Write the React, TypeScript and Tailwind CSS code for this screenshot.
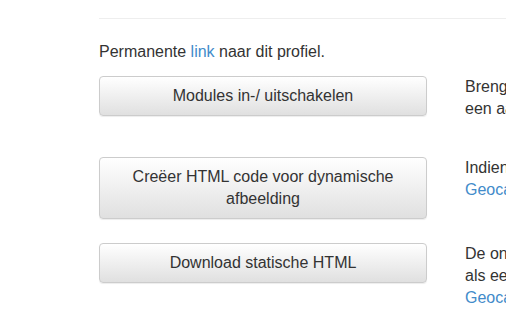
import React from 'react';

const rows = [
  {
    label: ['Modules in-/ uitschakelen'],
    lines: [
      <>Breng wijzigingen aan in de modules van dit profiel,</>,
      <>een aantal modules kun je hier aan- of uitzetten.</>,
    ],
    gap: 'mb-[37px]',
  },
  {
    label: ['Creëer HTML code voor dynamische', 'afbeelding'],
    lines: [
      <>Indien je jouw statistieken op een forum wilt tonen of op de</>,
      <a className="text-[#428bca]">Geocaching.com profielpagina</a>,
    ],
    gap: 'mb-[24px]',
  },
  {
    label: ['Download statische HTML'],
    lines: [
      <>De onderstaande HTML kun je downloaden en plaatsen</>,
      <>als een statische pagina op je eigen website of op je</>,
      <a className="text-[#428bca]">Geocaching.com profiel</a>,
    ],
    gap: '',
  },
];

export default function App() {
  return (
    <div
      className="w-[506px] h-[336px] overflow-hidden bg-white text-[16px] leading-[22px] text-[#333]"
      style={{ fontFamily: '"Liberation Sans", Arial, sans-serif' }}
    >
      <div className="w-[900px] pl-[99px] pt-[18px]">
        <hr className="border-0 border-t border-[#eee]" />
        <p className="mt-[22px] mb-[13px]">
          Permanente <a className="text-[#428bca]">link</a> naar dit profiel.
        </p>

        {rows.map((row, i) => (
          <div key={i} className={`flex items-start gap-[38px] ${row.gap}`}>
            <button className="w-[328px] shrink-0 rounded-[4px] border border-[#ccc] bg-gradient-to-b from-white to-[#e0e0e0] py-[8px] text-[16px] leading-[22px] text-[#333] shadow-[inset_0_1px_0_rgba(255,255,255,0.15),0_1px_1px_rgba(0,0,0,0.075)]">
              {row.label.map((l, j) => (
                <div key={j}>{l}</div>
              ))}
            </button>
            <div className="whitespace-nowrap">
              {row.lines.map((l, j) => (
                <div key={j}>{l}</div>
              ))}
            </div>
          </div>
        ))}
      </div>
    </div>
  );
}
